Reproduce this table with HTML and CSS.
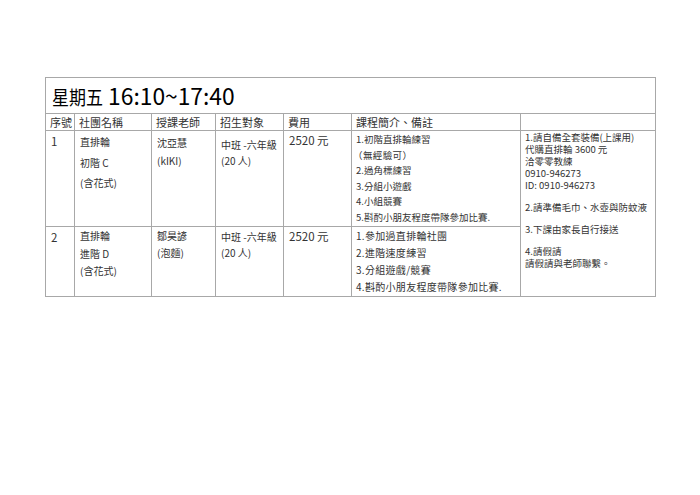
FILE: index.html
```html
<!DOCTYPE html>
<html lang="zh-Hant">
<head>
<meta charset="utf-8">
<link rel="stylesheet" href="styles.css">
</head>
<body>
<table class="sched">
  <colgroup>
    <col class="c1"><col class="c2"><col class="c3"><col class="c4"><col class="c5"><col class="c6"><col class="c7">
  </colgroup>
  <tr class="title-row"><td colspan="7" class="title"><span class="zh">星期五</span> 16:10~17:40</td></tr>
  <tr class="head-row">
    <td>序號</td><td>社團名稱</td><td>授課老師</td><td>招生對象</td><td>費用</td><td>課程簡介、備註</td><td></td>
  </tr>
  <tr class="r1">
    <td class="num">1</td>
    <td class="club"><div>直排輪</div><div>初階 C</div><div>(含花式)</div></td>
    <td class="teach"><div>沈亞慧</div><div>(kIKI)</div></td>
    <td class="target"><div>中班 -六年級</div><div>(20 人)</div></td>
    <td class="fee">2520 元</td>
    <td class="course"><div>1.初階直排輪練習</div><div class="paren">（無經驗可）</div><div>2.過角標練習</div><div>3.分組小遊戲</div><div>4.小組競賽</div><div>5.斟酌小朋友程度帶隊參加比賽.</div></td>
    <td class="notes" rowspan="2">
      <div>1.請自備全套裝備(上課用)</div>
      <div>代購直排輪 3600 元</div>
      <div>洽零零教練</div>
      <div>0910-946273</div>
      <div>ID: 0910-946273</div>
      <div class="blank"></div>
      <div>2.請準備毛巾、水壺與防蚊液</div>
      <div class="blank"></div>
      <div>3.下課由家長自行接送</div>
      <div class="blank"></div>
      <div>4.請假請</div>
      <div>請假請與老師聯繫。</div>
    </td>
  </tr>
  <tr class="r2">
    <td class="num">2</td>
    <td class="club"><div>直排輪</div><div>進階 D</div><div>(含花式)</div></td>
    <td class="teach"><div>鄒昊諺</div><div>(泡麵)</div></td>
    <td class="target"><div>中班 -六年級</div><div>(20 人)</div></td>
    <td class="fee">2520 元</td>
    <td class="course"><div>1.參加過直排輪社團</div><div>2.進階速度練習</div><div>3.分組遊戲/競賽</div><div>4.斟酌小朋友程度帶隊參加比賽.</div></td>
  </tr>
</table>
</body>
</html>
```
FILE: styles.css
```css
html, body { margin: 0; padding: 0; background: #fff; }
body {
  padding: 77px 0 0 45px;
  font-family: "Noto Sans CJK TC", "Noto Sans", sans-serif;
  color: #333;
}
.sched {
  border-collapse: collapse;
  table-layout: fixed;
  width: 611px;
  border: 1px solid #8a8a8a;
}
.c1 { width: 29px; }
.c2 { width: 77px; }
.c3 { width: 64px; }
.c4 { width: 68px; }
.c5 { width: 68px; }
.c6 { width: 169px; }
.c7 { width: 135px; }
.sched td {
  border: 1px solid #a8a8a8;
  padding: 0;
  vertical-align: top;
  overflow: hidden;
  white-space: nowrap;
}
.title-row { height: 36px; }
.head-row { height: 17px; }
.r1 { height: 96px; }
.r2 { height: 70px; }
.title {
  font-size: 22.8px;
  line-height: 35px;
  color: #000;
  padding-left: 6px !important;
}
.title .zh {
  display: inline-block;
  font-size: 17px;
  line-height: 20px;
  transform: scaleY(1.12);
  transform-origin: 50% 80%;
}
.head-row td {
  font-size: 11px;
  line-height: 16px;
  padding-left: 4px !important;
}
.num {
  font-size: 11.5px;
  line-height: 14px;
  padding: 3px 0 0 5px !important;
}
.fee {
  font-size: 11.5px;
  line-height: 14px;
  padding: 2px 0 0 5px !important;
}
.club, .teach, .target { font-size: 10px; padding-left: 5px !important; }
.r1 .club { line-height: 20.5px; padding-top: 1px !important; }
.r1 .teach { line-height: 18px; padding-top: 3px !important; }
.r1 .target { line-height: 16px; padding-top: 6px !important; }
.course { font-size: 9.5px; padding-left: 4px !important; }
.course .paren { margin-left: -3px; letter-spacing: 0.4px; }
.r1 .course { line-height: 15.5px; padding-top: 1px !important; }
.r2 .club { line-height: 17.5px; padding-top: 0 !important; }
.r2 .teach { line-height: 17px; padding-top: 0 !important; }
.r2 .target { line-height: 16px; padding-top: 2px !important; }
.r2 .course { font-size: 10px; letter-spacing: 0.3px; line-height: 17px; padding-top: 0 !important; }
.notes {
  font-size: 9.5px;
  line-height: 12px;
  padding: 0 0 0 4px !important;
  vertical-align: top;
}
.notes .blank { height: 10px; }
```
